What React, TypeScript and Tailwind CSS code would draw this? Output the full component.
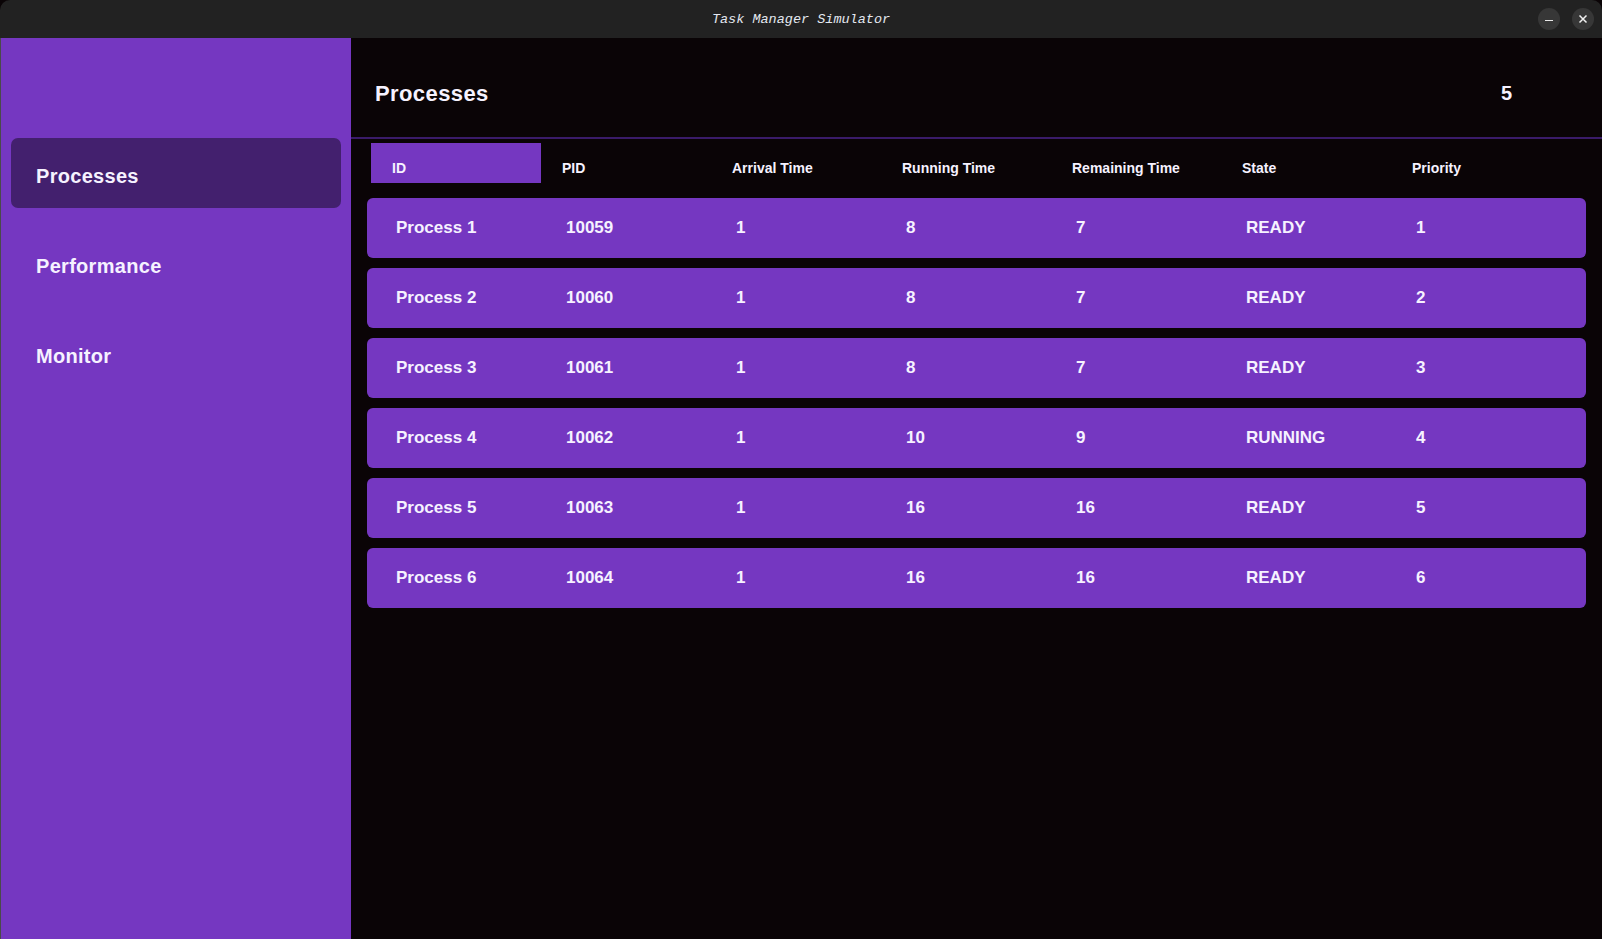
import React from 'react'

const processes = [
  { id: 'Process 1', pid: 10059, arrival: 1, running: 8, remaining: 7, state: 'READY', priority: 1 },
  { id: 'Process 2', pid: 10060, arrival: 1, running: 8, remaining: 7, state: 'READY', priority: 2 },
  { id: 'Process 3', pid: 10061, arrival: 1, running: 8, remaining: 7, state: 'READY', priority: 3 },
  { id: 'Process 4', pid: 10062, arrival: 1, running: 10, remaining: 9, state: 'RUNNING', priority: 4 },
  { id: 'Process 5', pid: 10063, arrival: 1, running: 16, remaining: 16, state: 'READY', priority: 5 },
  { id: 'Process 6', pid: 10064, arrival: 1, running: 16, remaining: 16, state: 'READY', priority: 6 },
]

const columns = ['ID', 'PID', 'Arrival Time', 'Running Time', 'Remaining Time', 'State', 'Priority']

const navItems = ['Processes', 'Performance', 'Monitor']

export default function App() {
  return (
    <div className="w-[1602px] h-[939px] flex flex-col bg-[#0a0406] overflow-hidden font-['Liberation_Sans',sans-serif] text-[#f6f2ff]">
      {/* title bar */}
      <div className="h-[38px] shrink-0 bg-[#222222] rounded-t-[10px] flex items-center relative">
        <div className="flex-1 text-center font-['Liberation_Mono',monospace] italic text-[13.5px] text-[#e4e8f0] pt-[3px]">
          Task Manager Simulator
        </div>
        <div className="absolute right-[8px] top-[8px] flex gap-[12px]">
          <div className="w-[22px] h-[22px] rounded-full bg-[#373737] flex items-center justify-center">
            <div className="w-[8px] h-[1.5px] bg-[#e8e8e8] mt-[3px]" />
          </div>
          <div className="w-[22px] h-[22px] rounded-full bg-[#373737] flex items-center justify-center">
            <svg width="10" height="10" viewBox="0 0 10 10">
              <path d="M1.5 1.5 L8.5 8.5 M8.5 1.5 L1.5 8.5" stroke="#f0f0f0" strokeWidth="1.5" />
            </svg>
          </div>
        </div>
      </div>

      <div className="flex flex-1 min-h-0">
        {/* sidebar */}
        <div className="w-[351px] shrink-0 bg-[#7537c1] border-l border-[#4a4a4a] pt-[100px] px-[10px] flex flex-col gap-[20px]">
          {navItems.map((item, i) => (
            <div
              key={item}
              className={
                'h-[70px] rounded-[7px] flex items-center pl-[25px] pt-[5px] text-[20px] font-bold tracking-[0.3px] ' +
                (i === 0 ? 'bg-[#43206e]' : '')
              }
            >
              {item}
            </div>
          ))}
        </div>

        {/* main */}
        <div className="flex-1 flex flex-col border-r border-[#3a3a3a]">
          <div className="h-[101px] shrink-0 flex items-center justify-between pl-[24px] pr-[90px] pt-[11px] border-b-2 border-[#3a1b69]">
            <div className="text-[22px] font-bold tracking-[0.4px]">Processes</div>
            <div className="text-[20px] font-bold">5</div>
          </div>

          <div className="pl-[20px] pt-[4px] flex">
            {columns.map((col, i) => (
              <div
                key={col}
                className={
                  'w-[170px] h-[40px] flex items-center pl-[21px] pt-[10px] text-[14px] font-bold ' +
                  (i === 0 ? 'bg-[#7537c1]' : '')
                }
              >
                {col}
              </div>
            ))}
          </div>

          <div className="pl-[16px] pr-[16px] pt-[15px] flex flex-col gap-[10px]">
            {processes.map((p) => (
              <div key={p.id} className="h-[60px] rounded-[6px] bg-[#7537c1] flex items-center pl-[29px] text-[17px] font-bold">
                <div className="w-[170px]">{p.id}</div>
                <div className="w-[170px]">{p.pid}</div>
                <div className="w-[170px]">{p.arrival}</div>
                <div className="w-[170px]">{p.running}</div>
                <div className="w-[170px]">{p.remaining}</div>
                <div className="w-[170px]">{p.state}</div>
                <div className="w-[170px]">{p.priority}</div>
              </div>
            ))}
          </div>
        </div>
      </div>
    </div>
  )
}
